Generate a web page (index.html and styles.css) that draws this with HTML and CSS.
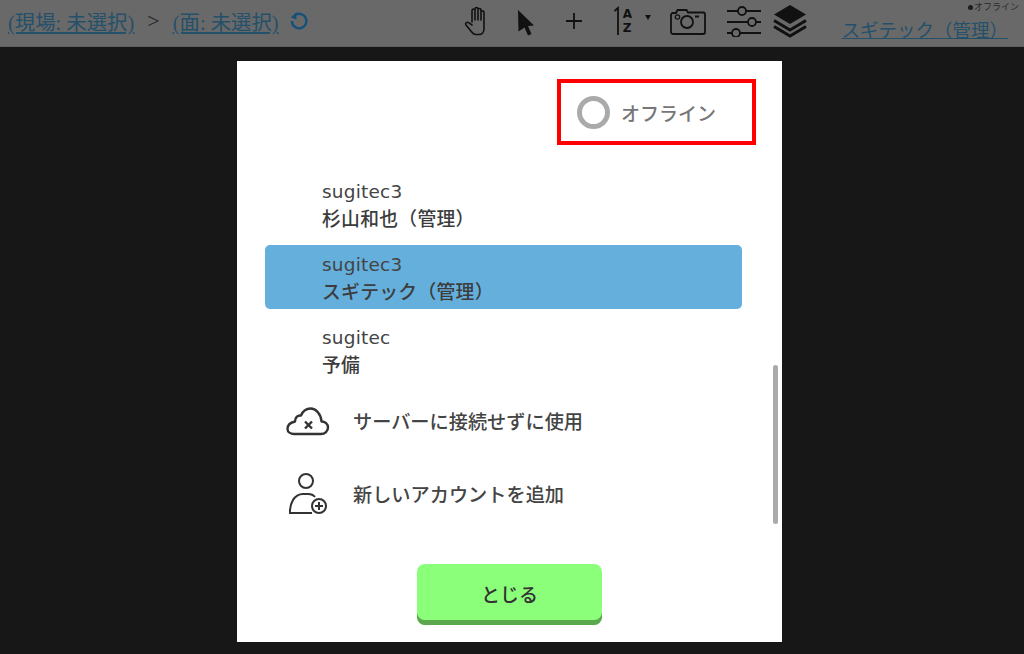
FILE: index.html
```html
<!DOCTYPE html>
<html lang="ja">
<head>
<meta charset="utf-8">
<title>アカウント</title>
<link rel="stylesheet" href="styles.css">
</head>
<body>
<header class="topbar">
  <nav class="crumbs">
    <a class="link crumb" href="#">(現場: 未選択)</a>
    <span class="sep">&gt;</span>
    <a class="link crumb" href="#">(面: 未選択)</a>
    <svg class="reload" width="22" height="22" viewBox="0 0 20 20" fill="none" stroke="#14507a" stroke-width="2.200"><path d="M6.5 4.6A6.6 6.6 0 1 1 3.6 10"/><path d="M2.6 6.8 7.6 2v6.6z" fill="#14507a" stroke="none"/></svg>
  </nav>
  <div class="tools">
    <svg class="t-hand" width="26" height="32" viewBox="0 0 26 32" fill="none" stroke="#111" stroke-width="1.6" stroke-linejoin="round" stroke-linecap="round"><path d="M8 17V5.5c0-2 3-2 3 0V15M11 14V4c0-2 3-2 3 0v11M14 15V5c0-2 3-2 3 0v10M17 15V7.5c0-2 3-2.300 3 0V24c0 3-2 5.500-5 5.500h-3c-3 0-4-2-5.500-4L2 20c-1.200-1.800 1-3.500 2.600-2.300L8 20"/></svg>
    <svg class="t-arrow" width="18" height="30" viewBox="0 0 18 30"><path d="M1 4 17 19.500 11 20 14.500 28 11 29.500 7.500 21.500 1.500 25.500z" fill="#111"/></svg>
    <svg class="t-plus" width="18" height="18" viewBox="0 0 18 18" stroke="#111" stroke-width="1.800"><path d="M9 1v16M1 9h16"/></svg>
    <div class="t-sort">
      <svg width="8" height="30" viewBox="0 0 8 30" fill="none" stroke="#111" stroke-width="1.800"><path d="M5 29V2L1.500 5"/></svg>
      <div class="az"><span>A</span><span>Z</span></div>
      <span class="caret"></span>
    </div>
    <svg class="t-cam" width="36" height="28" viewBox="0 0 36 28" fill="none" stroke="#111" stroke-width="1.800"><path d="M3 6h3l1.500-3h9L18 5.500h15a2 2 0 0 1 2 2V25a2 2 0 0 1-2 2H3a2 2 0 0 1-2-2V8a2 2 0 0 1 2-2z"/><circle cx="17" cy="15" r="6"/><circle cx="7.500" cy="10" r="2.200" stroke-width="1.200"/><path d="M25 9.500h4" stroke-width="2"/></svg>
    <svg class="t-sliders" width="36" height="32" viewBox="0 0 36 32" fill="none" stroke="#111" stroke-width="1.800"><path d="M1 6h11M20 6h15M1 17h21M30 17h5M1 28h5M14 28h21"/><circle cx="16" cy="6" r="4"/><circle cx="26" cy="17" r="4"/><circle cx="10" cy="28" r="4"/></svg>
    <svg class="t-layers" width="34" height="34" viewBox="0 0 34 34"><path d="M17 1 33 10.500 17 20 1 10.500z" fill="#111"/><path d="M1 16.500 17 26 33 16.500M1 22.500 17 32 33 22.500" fill="none" stroke="#111" stroke-width="3"/></svg>
  </div>
  <div class="user">
    <div class="status"><span class="dot"></span>オフライン</div>
    <a class="link user-link" href="#">スギテック（管理）</a>
  </div>
</header>
<main class="backdrop">
  <section class="modal">
    <div class="modal-top">
      <div class="state">
        <span class="ring"></span>
        <span class="state-label">オフライン</span>
      </div>
    </div>
    <div class="accounts">
      <div class="account"><div class="acc-id">sugitec3</div><div class="acc-name">杉山和也（管理）</div></div>
      <div class="account selected"><div class="acc-id">sugitec3</div><div class="acc-name">スギテック（管理）</div></div>
      <div class="account"><div class="acc-id">sugitec</div><div class="acc-name">予備</div></div>
    </div>
    <div class="actions">
      <div class="action">
        <svg width="44" height="30" viewBox="0 0 44 30" fill="none" stroke="#333" stroke-width="2.400" stroke-linejoin="round"><path d="M8 28h27c4 0 7-3 7-6.500S39 15.500 35.500 15.500C35 8 30 2.500 24.500 2.500 20 2.500 17 5 15 9.500 11.500 9 9 11.500 9 15.500 4.500 16.500 1.500 19.500 1.500 23c0 3 3 5 6.500 5z"/><path d="M19 15.500l7 7M26 15.500l-7 7" stroke-width="2.400"/></svg>
        <span>サーバーに接続せずに使用</span>
      </div>
      <div class="action">
        <svg width="44" height="44" viewBox="0 0 44 44" fill="none" stroke="#333" stroke-width="2"><circle cx="20" cy="9" r="7"/><path d="M26 41H4c-.5-9 4-19 13-19h5c3 0 5.500 1 7 3"/><circle cx="33" cy="34" r="7"/><path d="M33 30v8M29 34h8"/></svg>
        <span>新しいアカウントを追加</span>
      </div>
    </div>
    <span class="scroll-thumb"></span>
    <div class="footer"><button class="close" type="button">とじる</button></div>
    <div class="highlight"></div>
  </section>
</main>
</body>
</html>
```
FILE: styles.css
```css
* { box-sizing: border-box; }
html, body { margin: 0; height: 654px; overflow: hidden; }
body {
  display: flex;
  flex-direction: column;
  background: #171717;
  font-family: "DejaVu Sans", "Noto Sans CJK JP", sans-serif;
  color: #333;
}
.topbar {
  height: 47px;
  flex: none;
  background: #696969;
  display: flex;
  align-items: center;
  padding: 0 16px 0 8px;
  border-bottom: 1px solid #5f5f5f;
  font-family: "Liberation Serif", "Noto Sans CJK JP", serif;
}
.link { color: #245069; text-decoration: underline; font-size: 18.500px; }
.crumb { font-size: 20.400px; }
.crumbs { display: flex; align-items: center; margin-bottom: 4px; }
.sep { color: #222; font-size: 22px; margin: 0 13px 0 13px; }
.reload { margin-left: 9px; }
.tools {
  margin-left: 154px;
  display: flex;
  align-items: center;
  height: 42px;
  align-self: flex-start;
}
.t-arrow { margin-left: 27px; }
.t-plus { margin-left: 30px; }
.t-sort { margin-left: 30px; display: flex; align-items: center; color: #111; }
.az {
  display: flex;
  flex-direction: column;
  font: 700 12px/14px "DejaVu Sans", sans-serif;
  margin-left: 2px;
}
.caret {
  width: 0; height: 0;
  margin: -8px 0 0 13px;
  border-left: 3.500px solid transparent;
  border-right: 3.500px solid transparent;
  border-top: 5px solid #111;
}
.t-cam { margin-left: 19px; }
.t-sliders { margin-left: 20px; }
.t-layers { margin-left: 11px; }
.user {
  margin-left: auto;
  position: relative;
  align-self: stretch;
  display: flex;
  align-items: flex-end;
  padding-bottom: 5px;
}
.user-link {
  font-family: "Noto Sans CJK JP", sans-serif;
  font-size: 18.500px;
  line-height: 24px;
  white-space: nowrap;
}
.status {
  position: absolute;
  right: -11px;
  top: 1px;
  font: 9px/12px "Noto Sans CJK JP", sans-serif;
  color: #2a2a2a;
  display: flex;
  align-items: center;
  white-space: nowrap;
}
.dot { width: 5px; height: 5px; border-radius: 50%; background: #1c1c1c; margin-right: 1px; }
.backdrop { flex: 1; display: flex; justify-content: center; padding: 14px 0 12px; }
.modal {
  position: relative;
  width: 545px;
  margin-right: 5px;
  background: #fff;
  display: flex;
  flex-direction: column;
}
.modal-top { height: 111px; padding: 34px 0 0 340px; }
.state { display: flex; align-items: center; height: 34px; }
.ring { width: 33px; height: 33px; border-radius: 50%; border: 5px solid #aaa; }
.state-label { margin-left: 11px; font: 500 19px "Noto Sans CJK JP", sans-serif; color: #777; }
.accounts { padding: 0 40px 0 28px; display: flex; flex-direction: column; gap: 9px; }
.account { height: 64px; padding: 2px 0 0 57px; border-radius: 5px; display: flex; flex-direction: column; justify-content: center; font-size: 18.500px; line-height: 26px; }
.acc-id { color: #444; letter-spacing: .2px; }
.acc-name { font-family: "Noto Sans CJK JP", sans-serif; font-size: 18.800px; letter-spacing: .3px; color: #3c3c3c; font-weight: 500; }
.selected { background: #65afdd; }
.actions { display: flex; flex-direction: column; margin-top: 2px; }
.action { display: flex; align-items: center; height: 73px; padding-left: 49px; font-size: 19.200px; font-weight: 500; color: #444; }
.action svg { flex: none; width: 44px; margin-right: 23px; }
.scroll-thumb { position: absolute; left: 536px; top: 304px; width: 5px; height: 159px; border-radius: 3px; background: #aaa; }
.footer { margin-top: auto; padding-bottom: 17px; display: flex; justify-content: center; }
.close {
  width: 185px;
  height: 61px;
  border: 0;
  border-radius: 8px;
  background: #8bff7a;
  box-shadow: inset 0 -5px 0 #5ca84f;
  font: 500 19px "Noto Sans CJK JP", sans-serif;
  color: #333;
  padding-bottom: 3px;
}
.highlight { position: absolute; left: 320px; top: 18px; width: 199px; height: 66px; border: 4px solid #f00; }
```
